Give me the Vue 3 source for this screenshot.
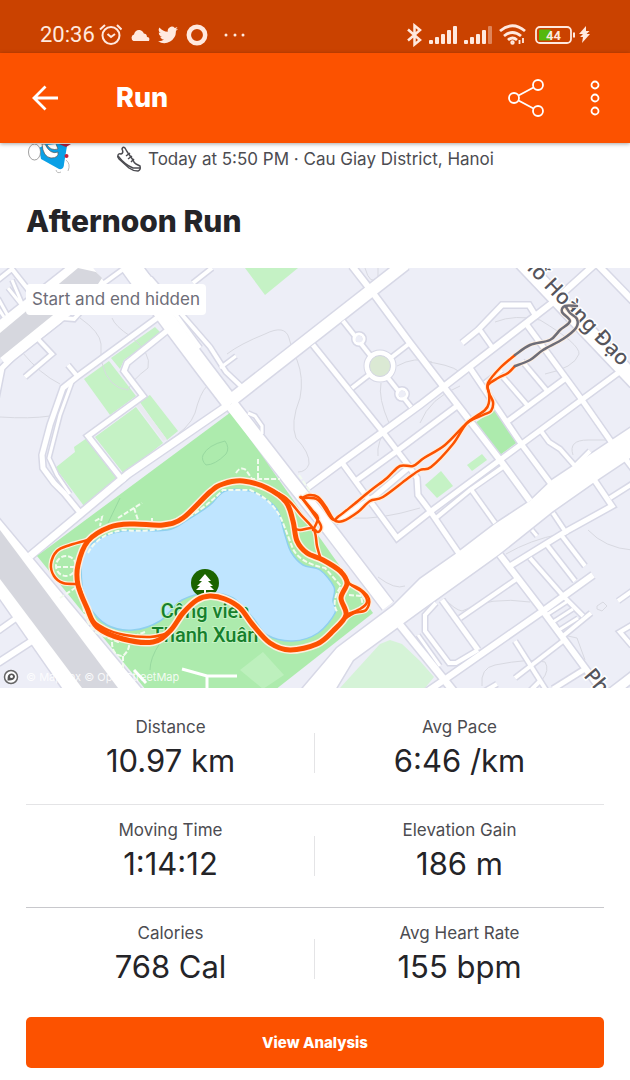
<script setup>
import { ref } from 'vue'

// Activity summary
const title = ref('Afternoon Run')
const meta = ref('Today at 5:50 PM · Cau Giay District, Hanoi')

const statRows = ref([
  [
    { label: 'Distance', value: '10.97 km' },
    { label: 'Avg Pace', value: '6:46 /km' }
  ],
  [
    { label: 'Moving Time', value: '1:14:12' },
    { label: 'Elevation Gain', value: '186 m' }
  ],
  [
    { label: 'Calories', value: '768 Cal' },
    { label: 'Avg Heart Rate', value: '155 bpm' }
  ]
])

// Turns a list of points into a smooth path (Catmull-Rom to bezier)
const smooth = (points, closed = false) => {
  const n = points.length
  const at = (i) => (closed ? points[(i + n) % n] : points[Math.max(0, Math.min(n - 1, i))])
  let d = `M${points[0][0]},${points[0][1]}`
  const last = closed ? n : n - 1
  for (let i = 0; i < last; i++) {
    const [p0, p1, p2, p3] = [at(i - 1), at(i), at(i + 1), at(i + 2)]
    const c1 = [p1[0] + (p2[0] - p0[0]) / 6, p1[1] + (p2[1] - p0[1]) / 6]
    const c2 = [p2[0] - (p3[0] - p1[0]) / 6, p2[1] - (p3[1] - p1[1]) / 6]
    d += `C${c1} ${c2} ${p2}`
  }
  return d
}

// Streets, w is the width of the white fill
const roads = [
  { w: 16, d: 'M127,-4L166,50L205,102L231,136' },
  { w: 13, d: 'M231,136L290,212L330,262L388,338' },
  { w: 4, d: 'M140,-2L200,80' },
  { w: 4, d: 'M150,10L210,79L226,104L243,120' },
  { w: 3, d: 'M220,100L236,88' },
  { w: 3, d: 'M248,145L255,148L262,158L262,166' },
  { w: 12, d: 'M405,-4L230,133' },
  { w: 7, d: 'M230,136L128,206L30,288' },
  { w: 4, d: 'M193,15L212,0' },
  { w: 4, d: 'M100,18L122,2' },
  { w: 5, d: 'M157,50L78,108L63,120L50,157L42,187L43,200L54,215L64,225L82,247' },
  { w: 3, d: 'M72,114L60,147L49,190L57,207L70,226' },
  { w: 4, d: 'M68,97L78,109' },
  { w: 5, d: 'M168,62L127,95L124,103L143,128L88,168L124,214' },
  { w: 4, d: 'M37,70L52,86L25,109' },
  { w: 5, d: 'M-4,130L2,100L14,88L60,52' },
  { w: 4, d: 'M-2,12L12,1L34,29L42,36' },
  { w: 3, d: 'M12,12L24,40L8,20M-2,30L8,48M-2,40L4,49' },
  { w: 4, d: 'M62,50L74,51L84,40' },
  { w: 6, d: 'M352,-2L373,25L410,75L443,118L500,192L530,233' },
  { w: 5, d: 'M313,77L382,163L408,197L417,210L418,227L430,243L460,287' },
  { w: 4, d: 'M343,53L411,139' },
  { w: 4, d: 'M352,120L410,75' },
  { w: 6, d: 'M593,-2L552,35L420,137L343,193L308,219' },
  { w: 5, d: 'M457,138L397,183L357,212' },
  { w: 5, d: 'M335,254L358,239L375,228L408,200' },
  { w: 5, d: 'M343,196L397,270L430,244L500,192L618,105' },
  { w: 4, d: 'M436,250L470,222L503,199' },
  { w: 6, d: 'M597,-4L633,33' },
  { w: 5, d: 'M470,100L522,177L551,216' },
  { w: 5, d: 'M527,57L582,132L612,175' },
  { w: 4, d: 'M502,108L528,138' },
  { w: 4, d: 'M522,93L548,124' },
  { w: 5, d: 'M508,153L566,110' },
  { w: 4, d: 'M485,115L502,102' },
  { w: 5, d: 'M462,75L478,62L502,37L529,37L537,50' },
  { w: 4, d: 'M480,62L492,79' },
  { w: 4, d: 'M541,163L549,174L560,181L575,198L590,183' },
  { w: 5, d: 'M625,190L634,202' },
  { w: 4, d: 'M470,220L495,255' },
  { w: 6, d: 'M500,287L543,343L563,370L602,423' },
  { w: 5, d: 'M510,298L565,264L612,238L593,210' },
  { w: 4, d: 'M610,230L632,216' },
  { w: 4, d: 'M553,245L567,266' },
  { w: 4, d: 'M562,268L585,298' },
  { w: 4, d: 'M547,277L575,313' },
  { w: 4, d: 'M530,290L565,330L583,348' },
  { w: 3, d: 'M532,262L537,268' },
  { w: 4, d: 'M460,350L518,310' },
  { w: 6, d: 'M425,425L447,410L543,343L593,307' },
  { w: 4, d: 'M563,368L591,345' },
  { w: 3, d: 'M548,346L568,333M553,354L573,341M559,362L578,350' },
  { w: 5, d: 'M442,332L478,382' },
  { w: 4, d: 'M436,335L425,347L425,363L449,395L456,395L478,382' },
  { w: 7, d: 'M400,357L455,425' },
  { w: 3, d: 'M418,367L440,398' },
  { w: 4, d: 'M515,373L546,422' },
  { w: 4, d: 'M515,410L563,373' },
  { w: 4, d: 'M530,423L541,412' },
  { w: 5, d: 'M553,421L585,401' },
  { w: 9, d: 'M610,426L636,406' },
  { w: 4, d: 'M618,333L632,323' },
  { w: 4, d: 'M632,357L620,364L632,378' },
  { w: 4, d: 'M485,423L497,416' },
  { w: 5, d: 'M-2,363L22,346' },
  { w: 6, d: 'M-2,395L38,369' },
  { w: 5, d: 'M138,-2L150,12' },
  { w: 15, d: 'M522,-6L636,114' }
]

// Thin contour lines
const contours = [
  'M227,86Q240,76 265,66Q285,56 289,70Q293,85 297,92Q304,110 300,130Q290,155 296,170Q310,185 309,196Q306,204 298,204',
  'M381,115Q378,130 389,155Q376,175 378,188',
  'M397,98Q415,88 432,94',
  'M420,93Q450,96 460,104',
  'M112,50Q115,58 130,68Q152,85 148,100Q132,112 128,122Q108,120 102,95',
  'M80,50Q100,64 101,76V95',
  'M0,149Q30,151 50,148Q66,140 68,125',
  'M22,84Q40,106 60,116',
  'M495,54Q515,46 540,52Q580,76 579,86Q574,100 545,106',
  'M573,187Q568,172 588,172H606',
  'M588,262Q605,280 632,282',
  'M506,286Q530,272 560,266',
  'M444,330Q455,342 462,343Q490,328 530,334',
  'M482,418Q480,400 495,397Q530,390 545,394Q550,402 542,412',
  'M568,368L577,370L585,392',
  'M597,338L603,334L607,338L602,343L597,341Z',
  'M352,250Q380,252 420,240',
  'M378,309Q395,322 405,318',
  'M365,0Q370,18 378,10V0',
  'M207,118Q200,125 195,145Q190,160 165,175',
  'M420,155Q430,130 460,118'
]

// Grass outside the lake park
const lawns = [
  '245,0 298,0 265,27',
  '84,111 109,93 136,128 110,147',
  '111,90 155,59 162,66 124,92 120,101',
  '95,169 136,139 163,175 124,206',
  '139,133 150,127 178,163 167,172',
  '55,200 75,184 74,179 87,170 118,210 118,217 84,238 60,206',
  '467,197 482,186 487,192 472,203',
  '425,217 441,203 453,218 437,230'
]

const lake = smooth([
  [83, 287], [97, 272], [123, 263], [167, 262], [187, 252], [210, 237], [225, 223], [250, 223],
  [267, 232], [278, 243], [285, 267], [291, 284], [303, 297], [320, 302], [334, 319], [333, 333],
  [335, 345], [318, 365], [293, 373], [267, 367], [253, 350], [233, 330], [210, 325], [182, 332],
  [160, 353], [133, 362], [107, 357], [88, 337], [82, 317]
], true)

// Recorded track
const mainLoop = smooth([
  [88, 273], [110, 259], [133, 256], [163, 257], [183, 250], [210, 224], [223, 216], [243, 213],
  [267, 220], [286, 234], [293, 253], [297, 273], [307, 285], [323, 292], [340, 303], [347, 315],
  [341, 330], [346, 347], [333, 363], [317, 376], [290, 382], [270, 375], [253, 357], [240, 340],
  [225, 331], [210, 328], [197, 332], [183, 345], [170, 363], [153, 374], [123, 371], [97, 359],
  [87, 340], [78, 317], [78, 297]
], true)

// A point listed twice in a row keeps its corner sharp
const sideTracks = [
  smooth([[88, 272], [70, 277], [57, 283], [51, 296], [54, 308], [63, 315], [78, 316]]),
  smooth([[80, 320], [90, 348], [104, 360], [125, 367], [150, 369], [165, 366]]),
  smooth([[347, 315], [360, 321], [369, 331], [366, 342], [354, 345], [346, 350]]),
  smooth([[341, 302], [350, 316], [362, 324], [367, 334], [360, 341], [345, 347]]),
  smooth([[267, 220], [286, 230], [301, 247], [314, 262], [317, 278], [321, 292]]),
  smooth([[294, 260], [300, 262], [312, 260], [318, 264], [321, 258], [313, 245], [302, 230], [302, 230],
    [309, 227], [318, 229], [326, 239], [334, 252], [343, 253], [358, 244], [370, 233], [383, 229],
    [407, 211], [420, 202], [431, 199], [453, 176], [467, 155], [483, 147], [491, 143], [493, 134],
    [489, 125], [488, 117], [498, 110], [508, 105], [515, 98]]),
  smooth([[313, 262], [318, 250], [312, 242], [302, 230], [302, 230], [318, 232], [332, 251], [339, 248],
    [353, 237], [370, 223], [387, 210], [400, 198], [413, 198], [424, 190], [445, 177], [467, 155],
    [485, 142], [489, 134], [489, 125], [488, 115], [500, 100], [515, 87]])
]

const hiddenTracks = [
  smooth([[515, 98], [530, 92], [543, 82], [563, 71], [576, 60], [577, 51], [570, 45], [566, 39]]),
  smooth([[515, 87], [530, 77], [550, 72], [560, 62], [570, 53], [562, 44], [565, 38], [577, 38]])
]
</script>

<template>
  <div class="screen">
    <!-- System status bar -->
    <div class="status-bar">
      <div class="status-left">
        <span class="clock">20:36</span>
        <svg class="alarm" width="23" height="23" viewBox="0 0 23 23" fill="none" stroke="currentColor" stroke-width="2">
          <circle cx="12" cy="12.500" r="8.500" />
          <path d="M8.500,11l3.500,3l4-3M1,6.500L6,2M18,2l4.500,4.500" />
        </svg>
        <svg class="cloud" width="20" height="12" viewBox="0 0 20 12" fill="currentColor">
          <path d="M3.500,12a3.500,3.500 0 0 1 .5-6.500C4.500,2 8,0 11,1.500c1.500,.7 2.300,1.700 2.800,3c2.800,.2 3,2 3.200,3.500C19,8 20,9.500 19,12z" />
        </svg>
        <svg width="20" height="18" viewBox="0 0 24 20" fill="currentColor">
          <path d="M24,2.400a10,10 0 0 1-2.800,.8a5,5 0 0 0 2.100-2.700a10,10 0 0 1-3.100,1.200a4.900,4.900 0 0 0-8.400,4.500A14,14 0 0 1 1.700,1a4.900,4.900 0 0 0 1.500,6.600A4.900,4.900 0 0 1 1,7a4.900,4.900 0 0 0 3.900,4.900a5,5 0 0 1-2.200,.1a4.900,4.900 0 0 0 4.600,3.400A9.900,9.900 0 0 1 0,17.500a14,14 0 0 0 21.500-12.500A10,10 0 0 0 24,2.400z" />
        </svg>
        <svg width="22" height="22" viewBox="0 0 22 22" fill="none" stroke="currentColor" stroke-width="4.500">
          <circle cx="11" cy="11" r="8.200" />
        </svg>
        <svg class="dots" width="22" height="4" viewBox="0 0 22 4" fill="currentColor">
          <circle cx="2" cy="2" r="1.500" /><circle cx="11" cy="2" r="1.500" /><circle cx="19" cy="2" r="1.500" />
        </svg>
      </div>
      <div class="status-right">
        <svg width="15" height="24" viewBox="0 0 15 24" fill="none" stroke="currentColor" stroke-width="2.500">
          <path d="M1,6.500L13,17L7.500,21.500V2.500L13,7L1,17.500" />
        </svg>
        <svg v-for="n in 2" :key="n" width="28" height="18" viewBox="0 0 28 18" fill="currentColor">
          <rect x="0" y="14" width="4" height="4" rx="1" />
          <rect x="6" y="11" width="4" height="7" rx="1" />
          <rect x="12" y="8" width="4" height="10" rx="1" />
          <rect x="18" y="4" width="4" height="14" rx="1" />
          <rect x="24" y="0" width="4" height="18" rx="1" :opacity="n === 2 ? 0.4 : 1" />
        </svg>
        <svg width="27" height="21" viewBox="0 0 27 21" fill="none" stroke="currentColor" stroke-width="2.800">
          <path d="M1,7Q13.500-3.500 26,7M5,12Q13.500,5 22,12M9,16Q13.500,12 18,16" />
          <circle cx="13.500" cy="18.500" r="1.200" stroke-width="2" />
          <path d="M20.500,16v4M24,14v5" stroke-width="1.800" />
        </svg>
        <svg class="battery" width="40" height="18" viewBox="0 0 40 18">
          <rect x="1" y="1" width="35" height="16" rx="4" fill="none" stroke="currentColor" stroke-width="1.800" />
          <rect x="4" y="3.500" width="12" height="11" rx="1" fill="#55b80c" />
          <path d="M39,6.500v5" stroke="currentColor" stroke-width="2" />
          <text x="18.500" y="14" class="battery-text">44</text>
        </svg>
        <svg class="bolt" width="11" height="17" viewBox="0 0 11 17" fill="currentColor">
          <path d="M7,0L0,8h4L1,11h3L3,17L11,8H7.500L10.500,5H7z" />
        </svg>
      </div>
    </div>

    <!-- App toolbar -->
    <header class="toolbar">
      <button class="icon-button" aria-label="Back">
        <svg width="26" height="26" viewBox="0 0 26 26" fill="none" stroke="currentColor" stroke-width="2.800">
          <path d="M26,13H2M13.500,1.500L2,13l11.500,11.500" />
        </svg>
      </button>
      <h1>Run</h1>
      <button class="icon-button share" aria-label="Share">
        <svg width="36" height="38" viewBox="0 0 36 38" fill="none" stroke="currentColor" stroke-width="1.800">
          <circle cx="6" cy="19" r="5" /><circle cx="30" cy="6" r="5" /><circle cx="30" cy="32" r="5" />
          <path d="M10.500,16.500L25.500,8.500M10.500,21.500L25.500,29.500" />
        </svg>
      </button>
      <button class="icon-button" aria-label="More options">
        <svg width="10" height="36" viewBox="0 0 10 36" fill="none" stroke="currentColor" stroke-width="1.800">
          <circle cx="5" cy="5" r="3.500" /><circle cx="5" cy="18" r="3.500" /><circle cx="5" cy="31" r="3.500" />
        </svg>
      </button>
    </header>

    <main>
      <div class="meta">
        <!-- Lower part of the avatar, scrolled under the toolbar -->
        <svg class="avatar" width="44" height="30" viewBox="0 0 44 30">
          <path d="M11,4L13,15L31,25Q36,26 36,20L39,2L33,0H18z" fill="#0aa0e6" />
          <path d="M31,0h12l-5,3z" fill="#b3203c" />
          <path d="M14,0Q15,13 23,14Q31,14 30,8Q22,11 17,0z" fill="#fff" stroke="#555" stroke-width=".7" />
          <path d="M19,1Q23,7 30,5L28,0" fill="#fff" stroke="#555" stroke-width=".7" />
          <ellipse cx="6.500" cy="8" rx="6" ry="8" fill="#fff" stroke="#777" stroke-width=".7" />
          <circle cx="38.500" cy="12" r="2" fill="#c62139" />
          <path d="M38,16Q43,20 40,27M28,26Q29,30 33,28" fill="none" stroke="#aaa" stroke-width=".8" />
        </svg>
        <svg class="shoe" width="26" height="26" viewBox="0 0 26 26" fill="none" stroke="currentColor" stroke-width="1.500" stroke-linejoin="round">
          <path d="M2,9Q1,11 3,13L13,22Q17,25 22,25Q25,24 24,20L20,18Q18,17 17,14L12,7Q10,4 9,2Q7,0 6,3Q8,7 5,8Q3,7 2,9z" />
          <path d="M2,10Q9,19 17,22L24,22M10,10l4-3M12,13l4-3M15,16l3-3" />
        </svg>
        <span>{{ meta }}</span>
      </div>
      <h2>{{ title }}</h2>

      <!-- Route map -->
      <div class="map">
        <svg class="map-canvas" viewBox="0 0 630 420" role="img" aria-label="Route map">
          <rect width="630" height="420" fill="#edeef7" />
          <polygon v-for="p in lawns" :key="p" :points="p" fill="#c5f2c5" />
          <polygon points="340,420 380,376 390,372 402,376 420,393 434,409 425,420" fill="#d5f3d7" />
          <polygon points="475,155 495,141 519,173 500,187" fill="#adebad" />
          <g class="contours">
            <path v-for="d in contours" :key="d" :d="d" />
          </g>
          <path d="M137,135L165,172" fill="none" stroke="#e9eaf0" stroke-width="4" />

          <!-- Street casings first, then all the fills so junctions merge -->
          <g class="casing">
            <path v-for="(r, i) in roads" :key="i" :d="r.d" :stroke-width="r.w + 3" />
            <circle cx="359" cy="71" r="5" stroke-width="6" />
            <circle cx="380" cy="98" r="13" stroke-width="7" />
            <circle cx="402" cy="126" r="5" stroke-width="6" />
            <path d="M-6,82L95,2" stroke-width="43" />
            <polygon points="-4,247 -4,325 65,424 144,424" stroke-width="3" />
            <polygon points="303,420 337,380 393,338 420,311 457,285 495,256 530,233 552,212 636,156 636,186 600,210 553,243 498,287 420,343 353,392 335,422" stroke-width="3" />
          </g>
          <polygon points="231,144 373,345 275,422 146,422 37,288" fill="#adebad" />
          <g class="fill">
            <path v-for="(r, i) in roads" :key="i" :d="r.d" :stroke-width="r.w" />
            <circle cx="359" cy="71" r="5" stroke-width="3" />
            <circle cx="380" cy="98" r="13" stroke-width="5" />
            <circle cx="402" cy="126" r="5" stroke-width="3" />
            <path d="M-6,82L95,2" stroke-width="40" />
          </g>
          <g fill="#fff">
            <polygon points="-4,247 -4,325 65,424 144,424" />
            <polygon points="303,420 337,380 393,338 420,311 457,285 495,256 530,233 552,212 636,156 636,186 600,210 553,243 498,287 420,343 353,392 335,422" />
          </g>
          <g fill="#d6d7de">
            <polygon points="0,65 78,0 96,4 102,10 98,16 84,22 0,90" />
            <polygon points="0,262 118,420 82,420 0,311" />
          </g>
          <g fill="none" stroke="#edeef7">
            <circle cx="359" cy="71" r="3" fill="#edeef7" />
            <circle cx="402" cy="126" r="3" fill="#edeef7" />
          </g>
          <circle cx="380" cy="98" r="10.500" fill="#dbe9d4" stroke="#d5d6e4" />

          <!-- Park with the lake -->
          <polygon points="240,402 263,384 284,407 263,421" fill="#bdf0bd" />
          <path d="M182,401L207,408H237M207,408V421M134,402L146,415" fill="none" stroke="#fff" stroke-width="3" />
          <path d="M203,187Q208,177 225,173Q230,180 226,186Q215,197 206,197Q201,192 203,187M120,230L108,255M150,402Q150,390 160,375" fill="none" stroke="#98d9a0" />
          <path :d="lake" fill="#bfe5ff" stroke="#8fd0ee" stroke-width="1.500" />
          <path
            class="footpath"
            d="M88,285Q98,266 123,262Q165,266 187,250Q205,240 223,222H250Q274,232 283,255L293,281Q300,295 325,300L341,318Q330,335 338,345M84,325Q80,348 95,364L118,374L145,364M118,250L142,235M134,240L138,252M152,250V258M60,330L78,318M56,299H76M112,374Q112,388 123,388Q132,380 128,370M123,388V400M258,191V212M236,205Q240,198 246,202L252,211H280M95,253L102,249L100,258M349,327L361,328L363,338L350,345M299,207L309,222L300,232"
          />
          <circle class="footpath" cx="66" cy="298" r="10" />

          <circle cx="205" cy="315" r="14" fill="#1b6400" />
          <path d="M205,306l-6,7h3l-5,5h3l-4,4h8v3h2v-3h8l-4-4h3l-5-5h3z" fill="#fff" />
          <text class="park-name" x="205" y="350">Công viên</text>
          <text class="park-name" x="205" y="374">Thanh Xuân</text>

          <text class="street-name end" transform="translate(621 99) rotate(46)">Phố Hoàng Đạo</text>
          <text class="street-name" transform="translate(583 408) rotate(50)">Phố</text>

          <!-- Route: pale outline below the coloured line -->
          <g class="halo">
            <path :d="mainLoop" stroke-width="8" />
            <path v-for="d in sideTracks" :key="d" :d="d" stroke-width="5" />
            <path v-for="d in hiddenTracks" :key="d" :d="d" stroke-width="4" />
          </g>
          <g class="track">
            <path :d="mainLoop" stroke-width="5" />
            <path v-for="d in sideTracks" :key="d" :d="d" stroke-width="2.500" />
          </g>
          <g class="track hidden-part">
            <path v-for="d in hiddenTracks" :key="d" :d="d" stroke-width="2.500" />
          </g>

          <circle cx="11" cy="409" r="6.500" fill="#fff" stroke="#666" stroke-width="1.500" />
          <path d="M7.500,412.500Q7,405 12,405.500Q15,406 15,409Q14,413 7.500,412.500z" fill="#555" />
          <circle cx="11.500" cy="408.500" r="1.500" fill="#fff" />
          <text class="attribution" x="26" y="413">© Mapbox © OpenStreetMap</text>
        </svg>
        <span class="map-badge">Start and end hidden</span>
      </div>

      <!-- Stats grid -->
      <section class="stats">
        <dl v-for="(row, index) in statRows" :key="index" class="stat-row" :class="{ strong: index === 1 }">
          <div v-for="stat in row" :key="stat.label" class="stat">
            <dt>{{ stat.label }}</dt>
            <dd>{{ stat.value }}</dd>
          </div>
        </dl>
        <button class="analysis-button">View Analysis</button>
      </section>
    </main>
  </div>
</template>

<style>
body {
  margin: 0;
  background: #fff;
}
</style>

<style scoped>
.screen {
  font-family: Inter, "Liberation Sans", sans-serif;
  color: #242428;
  background: #fff;
  overflow: hidden;
}

svg {
  display: block;
  flex-shrink: 0;
}

button {
  font-family: inherit;
  border: none;
  cursor: pointer;
}

/* Status bar */
.status-bar {
  display: flex;
  justify-content: space-between;
  height: 37px;
  padding: 16px 40px 0;
  background: #ca4200;
  color: #ffe9df;
}

.status-left,
.status-right {
  display: flex;
  align-items: center;
}

.status-left {
  gap: 8px;
}

.status-right {
  gap: 7px;
}

.clock {
  font-family: Roboto, sans-serif;
  font-size: 22px;
  line-height: 37px;
  margin-right: -4px;
}

.dots {
  margin-left: 8px;
}

.battery {
  margin-left: 2px;
}

.bolt {
  margin-left: -3px;
}

.battery-text {
  font: 700 13px Roboto, sans-serif;
  fill: #ffe9df;
  text-anchor: middle;
}

/* Toolbar */
.toolbar {
  position: relative;
  display: flex;
  align-items: center;
  height: 90px;
  padding: 0 30px 0 32px;
  background: #fc5200;
  color: #fff;
  box-shadow: 0 1px 4px rgba(0, 0, 0, 0.35);
}

.toolbar h1 {
  flex: 1;
  margin: 0 0 0 58px;
  font-size: 27px;
  line-height: 36px;
  font-weight: 800;
}

.icon-button {
  padding: 0;
  background: none;
  color: inherit;
}

.share {
  margin-right: 46px;
}

/* Activity heading */
.meta {
  display: flex;
  align-items: center;
  height: 32px;
  padding: 0 28px;
  font-size: 17px;
  line-height: 32px;
  color: #4c4c51;
  white-space: nowrap;
}

.avatar {
  margin-right: 44px;
}

.shoe {
  margin-right: 6px;
}

h2 {
  margin: 0;
  padding: 26px 26px 27px;
  font-size: 30px;
  line-height: 40px;
  font-weight: 800;
}

/* Map */
.map {
  position: relative;
}

.map-canvas {
  width: 100%;
  height: auto;
}

.map-badge {
  position: absolute;
  top: 16px;
  left: 26px;
  padding: 0 6px;
  border-radius: 4px;
  background: #fff;
  color: #6d6d78;
  font-size: 17px;
  line-height: 31px;
}

.contours {
  fill: none;
  stroke: #d8d9e1;
}

.casing {
  fill: none;
  stroke: #d7d8e6;
}

.fill {
  fill: none;
  stroke: #fff;
}

.footpath {
  fill: none;
  stroke: #f2fbef;
  stroke-width: 2px;
  stroke-dasharray: 5 2;
}

.halo {
  fill: none;
  stroke: #ffeedd;
  stroke-linejoin: round;
}

.track {
  fill: none;
  stroke: #fc5200;
  stroke-linejoin: round;
  stroke-linecap: round;
}

.hidden-part {
  stroke: #6d6d78;
}

.park-name {
  font: 500 20px Roboto, sans-serif;
  fill: #16802c;
  stroke: #c5f2c5;
  stroke-width: 2px;
  paint-order: stroke;
  text-anchor: middle;
}

.street-name {
  font: 500 21px "Noto Sans", sans-serif;
  fill: #55555c;
  stroke: #fff;
  stroke-width: 3px;
  paint-order: stroke;
}

.end {
  text-anchor: end;
}

.attribution {
  font: 400 11px Inter, sans-serif;
  fill: #fff;
  opacity: 0.85;
}

/* Stats */
.stats {
  padding: 14px 26px 12px;
}

.stat-row {
  display: flex;
  margin: 0;
  padding: 15px 0 23px;
  border-bottom: 1px solid #e4e4e6;
}

.stat-row.strong {
  border-bottom-color: #c8c8cc;
}

.stat-row:last-of-type {
  border-bottom: none;
  padding-bottom: 30px;
}

.stat {
  position: relative;
  flex: 1;
  text-align: center;
}

.stat + .stat::before {
  content: '';
  position: absolute;
  left: -1px;
  top: 16px;
  width: 1px;
  height: 40px;
  background: #e4e4e6;
}

dt {
  font-size: 17px;
  line-height: 20px;
  color: #4c4c51;
}

dd {
  margin: 4px 0 0;
  font-size: 31px;
  line-height: 40px;
}

.analysis-button {
  display: block;
  width: 100%;
  padding: 0;
  border-radius: 5px;
  background: #fc5200;
  color: #fff;
  font-size: 15px;
  line-height: 51px;
  font-weight: 800;
}
</style>
